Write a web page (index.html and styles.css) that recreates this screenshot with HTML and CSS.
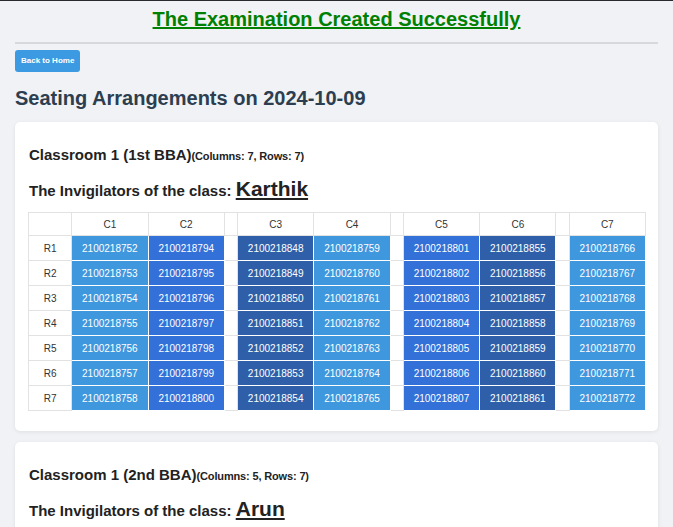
FILE: index.html
```html
<!DOCTYPE html>
<html>
<head>
<meta charset="utf-8">
<link rel="stylesheet" href="styles.css">
</head>
<body>
<div class="topline"></div>
<div class="page">
  <h1 class="success">The Examination Created Successfully</h1>
  <hr class="divider">
  <a class="btn" href="#">Back to Home</a>
  <h2 class="title">Seating Arrangements on 2024-10-09</h2>

  <div class="card">
    <h3 class="room">Classroom 1 (1st BBA)<span class="meta">(Columns: 7, Rows: 7)</span></h3>
    <h4 class="invig">The Invigilators of the class: <span class="name">Karthik</span></h4>
    <table class="seats">
      <thead>
        <tr><th class="corner"></th><th>C1</th><th>C2</th><th class="gap"></th><th>C3</th><th>C4</th><th class="gap"></th><th>C5</th><th>C6</th><th class="gap"></th><th>C7</th></tr>
      </thead>
      <tbody id="rows"></tbody>
    </table>
  </div>

  <div class="card">
    <h3 class="room">Classroom 1 (2nd BBA)<span class="meta">(Columns: 5, Rows: 7)</span></h3>
    <h4 class="invig">The Invigilators of the class: <span class="name">Arun</span></h4>
  </div>
</div>
<script>
  var starts = [752, 794, 848, 759, 801, 855, 766];
  var cls = ['c-light', 'c-mid', 'c-dark'];
  var body = document.getElementById('rows');
  var html = '';
  for (var r = 0; r < 7; r++) {
    html += '<tr><th class="rh">R' + (r + 1) + '</th>';
    for (var c = 0; c < 7; c++) {
      if (c === 2 || c === 4 || c === 6) html += '<td class="gap"></td>';
      html += '<td class="seat ' + cls[c % 3] + '">2100218' + (starts[c] + r) + '</td>';
    }
    html += '</tr>';
  }
  body.innerHTML = html;
</script>
</body>
</html>
```

FILE: styles.css
```css
* { box-sizing: border-box; }
html, body { margin: 0; padding: 0; }
body {
  background: #f0f2f5;
  font-family: "Liberation Sans", Arial, sans-serif;
  color: #2c3e50;
}
.topline { height: 1px; background: #2a2a2e; }
.page { padding: 0 15px 20px 15px; }
.success {
  margin: 5px 0 0 0;
  text-align: center;
  color: #008000;
  font-size: 20px;
  line-height: 26px;
  text-decoration: underline;
  font-weight: bold;
}
.divider {
  margin: 10px 0 5px 0;
  border: 0;
  height: 2px;
  background: #d6d8dc;
}
.btn {
  display: inline-block;
  background: #3b9ae1;
  color: #fff;
  font-size: 8px;
  font-weight: bold;
  text-decoration: none;
  padding: 0 6px;
  height: 22px;
  line-height: 22px;
  border-radius: 3px;
}
.title {
  margin: 13px 0 11px 0;
  font-size: 20px;
  line-height: 26px;
  font-weight: bold;
  color: #2c3e50;
}
.card {
  background: #fff;
  border-radius: 5px;
  box-shadow: 0 1px 4px rgba(0,0,0,0.08);
  padding: 24px 13px 20px 13px;
  margin-bottom: 11px;
}
.room {
  margin: 0 0 0 1px;
  font-size: 15px;
  line-height: 18px;
  color: #222;
}
.meta { font-size: 11px; font-weight: bold; letter-spacing: -0.15px; }
.invig {
  margin: 12px 0 9px 1px;
  font-size: 15px;
  line-height: 24px;
  color: #222;
}
.name {
  font-size: 21px;
  text-decoration: underline;
}
.seats {
  border-collapse: collapse;
  width: 618px;
  font-size: 10px;
}
.seats th, .seats td {
  border: 1px solid #e2e2e2;
  text-align: center;
  padding: 0;
}
.seats thead th {
  height: 23px;
  font-weight: normal;
  color: #333;
  width: 76px;
}
.seats thead th.corner { width: 43px; }
.seats .gap { width: 13px; background: #fff; }
.seats .rh {
  height: 25px;
  font-weight: normal;
  color: #333;
  background: #fff;
}
.seat {
  color: #fff;
  height: 25px;
  border-color: #fff !important;
}
.c-light { background: #3f97dd; }
.c-mid { background: #3370d8; }
.c-dark { background: #2f5fa8; }
```
